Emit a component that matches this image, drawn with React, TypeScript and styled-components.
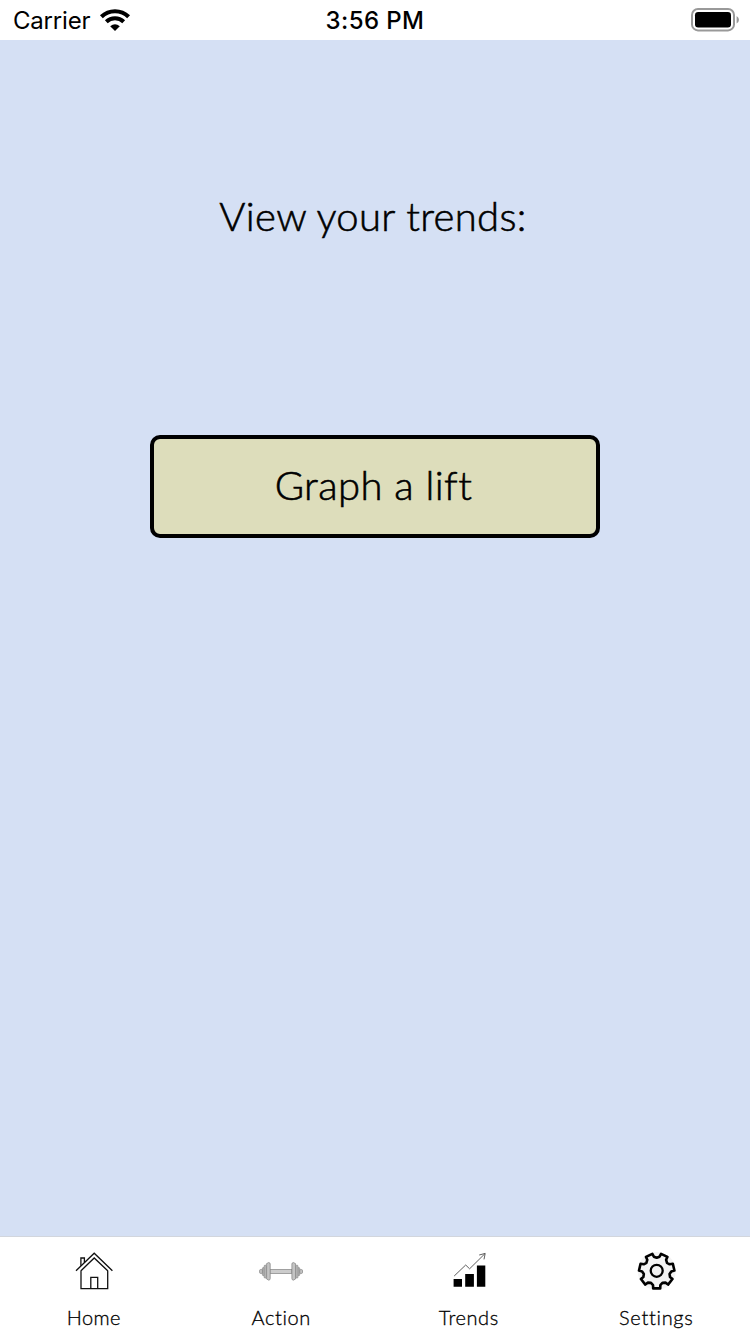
import React from "react";
import styled, { createGlobalStyle } from "styled-components";

const GlobalStyle = createGlobalStyle`
  body { margin: 0; background: #fff; }
  * { box-sizing: border-box; }
`;

const Screen = styled.div`
  display: flex;
  flex-direction: column;
  width: 750px;
  height: 1334px;
  overflow: hidden;
  background: #d5e0f4;
  color: #000;
  font-family: Lato, "Liberation Sans", sans-serif;
`;

const StatusBar = styled.header`
  display: grid;
  grid-template-columns: 1fr auto 1fr;
  align-items: center;
  height: 40px;
  padding: 0 11px 0 13px;
  background: #fff;
  font-family: Inter, "Liberation Sans", sans-serif;
  font-size: 24px;
  line-height: 38px;
`;

const Carrier = styled.div`
  display: flex;
  align-items: center;
  gap: 9px;
  letter-spacing: -0.2px;
`;

const StatusText = styled.span`
  padding-top: 2px;
`;

const Clock = styled(StatusText)`
  margin-right: 2px;
  font-weight: 500;
  letter-spacing: 0.4px;
`;

const BatterySlot = styled.div`
  display: flex;
  justify-content: flex-end;
`;

const Content = styled.main`
  flex: 1;
  display: flex;
  flex-direction: column;
  align-items: center;
`;

const Title = styled.h1`
  margin: 146px 0 0;
  padding-right: 4px;
  font-size: 40px;
  line-height: 60px;
  font-weight: 300;
  letter-spacing: 0.33px;
  -webkit-text-stroke: 0.6px #000;
  white-space: nowrap;
`;

const GraphButton = styled.button`
  width: 450px;
  height: 103px;
  margin: 189px 0 0;
  padding: 0 3px 3px 0;
  border: 4px solid #000;
  border-radius: 10px;
  background: #ddddbb;
  color: #000;
  font-family: inherit;
  font-size: 40px;
  font-weight: 300;
  letter-spacing: 0.45px;
  -webkit-text-stroke: 0.6px #000;
`;

const TabBar = styled.nav`
  display: flex;
  height: 98px;
  border-top: 1px solid #d2d6dd;
  background: #fff;
`;

const Tab = styled.a`
  flex: 1;
  display: flex;
  flex-direction: column;
  align-items: center;
  padding-top: 14px;
`;

const TabLabel = styled.span<{ $spacing: number }>`
  margin-top: 12px;
  font-size: 20px;
  line-height: 28px;
  font-weight: 300;
  letter-spacing: ${(p) => p.$spacing}px;
  -webkit-text-stroke: 0.3px #000;
`;

const Wifi = () => (
  <svg width="32" height="24" viewBox="0 0 32 24" fill="none" stroke="#000">
    <path d="M2.4 8.8A19.5 19.5 0 0 1 29.6 8.8" strokeWidth="4.1" />
    <path d="M7.3 13.8A12.5 12.5 0 0 1 24.7 13.8" strokeWidth="4" />
    <path d="M11.2 18.2Q16 14.2 20.8 18.2L16 23Z" fill="#000" stroke="none" />
  </svg>
);

const Battery = () => (
  <svg width="48" height="24" viewBox="0 0 48 24">
    <rect x="1" y="1" width="42" height="21.4" rx="6" fill="none" stroke="#999" strokeWidth="2" />
    <rect x="4" y="4" width="36" height="15.4" rx="3.2" />
    <path d="M45.6 8Q48 9.4 48 11.8T45.6 15.6Z" fill="#999" />
  </svg>
);

const HomeIcon = () => (
  <svg width="48" height="40" viewBox="0 0 48 40" fill="none" stroke="#111" strokeWidth="1.3">
    <path d="M6 19.8L24.2 2.2L42.4 19.8M11 19.5V37.6H37.7V19.5M11 19.8L24.2 7L37.7 19.8" />
    <path d="M10.9 14.8V7H14.4V11.4M20.8 37.6V26.4H27.7V37.6" />
  </svg>
);

const DumbbellIcon = () => (
  <svg width="48" height="40" viewBox="0 0 48 40" fill="#c4c4c4" stroke="#808080" strokeWidth="0.7">
    <rect x="12.8" y="18.6" width="22" height="3.8" fill="#ccc" />
    {["", "matrix(-1 0 0 1 48.1 0)"].map((transform) => (
      <g key={transform} transform={transform}>
        <rect x="2.6" y="18.6" width="3" height="3.8" rx="1" />
        <rect x="5.4" y="16.6" width="1.8" height="8" rx="0.8" />
        <rect x="7.2" y="14.2" width="2" height="12.8" rx="0.8" />
        <path d="M9.6 12.6L11.8 11.5Q13.2 11.7 13.2 13V27.6Q13.2 29 11.8 29.2L9.6 28Z" />
      </g>
    ))}
  </svg>
);

const TrendsIcon = () => (
  <svg width="48" height="40" viewBox="0 0 48 40">
    <path d="M8.6 28H17V35.8H8.6ZM20.2 23H28.9V35.8H20.2ZM31.9 14.4H40.3V35.8H31.9Z" />
    <path d="M9.2 25L20.7 14L24.6 17.8L40 2.6M34.2 4L40.2 2.4L39 8.4" fill="none" stroke="#555" strokeWidth="0.95" />
  </svg>
);

// Outline of a seven-toothed gear, one tooth pointing straight down.
const gearOutline = (cx: number, cy: number): string => {
  const steps: [number, number][] = [
    [-14.5, 14.6],
    [-11.5, 17.7],
    [11.5, 17.7],
    [14.5, 14.6],
    [25.7, 13.2],
  ];
  const points: string[] = [];
  for (let tooth = 0; tooth < 7; tooth++) {
    for (const [offset, radius] of steps) {
      const angle = ((90 + (tooth * 360) / 7 + offset) * Math.PI) / 180;
      points.push(`${(cx + radius * Math.cos(angle)).toFixed(2)} ${(cy + radius * Math.sin(angle)).toFixed(2)}`);
    }
  }
  return `M${points.join("L")}Z`;
};

const SettingsIcon = () => (
  <svg width="48" height="40" viewBox="0 0 48 40" fill="none" stroke="#000" strokeWidth="2.6" strokeLinejoin="round">
    <circle cx="24.7" cy="20" r="19" fill="#f3f3f3" stroke="none" />
    <path d={gearOutline(24.7, 20)} />
    <circle cx="24.7" cy="19.8" r="6" strokeWidth="2.3" />
  </svg>
);

const tabs = [
  { label: "Home", icon: HomeIcon, spacing: 0.4 },
  { label: "Action", icon: DumbbellIcon, spacing: 0.6 },
  { label: "Trends", icon: TrendsIcon, spacing: 0.6 },
  { label: "Settings", icon: SettingsIcon, spacing: 0.7 },
];

export default function App() {
  return (
    <>
      <GlobalStyle />
      <Screen>
        <StatusBar>
          <Carrier>
            <StatusText>Carrier</StatusText>
            <Wifi />
          </Carrier>
          <Clock>3:56 PM</Clock>
          <BatterySlot>
            <Battery />
          </BatterySlot>
        </StatusBar>
        <Content>
          <Title>View your trends:</Title>
          <GraphButton>Graph a lift</GraphButton>
        </Content>
        <TabBar>
          {tabs.map(({ label, icon: Icon, spacing }) => (
            <Tab key={label}>
              <Icon />
              <TabLabel $spacing={spacing}>{label}</TabLabel>
            </Tab>
          ))}
        </TabBar>
      </Screen>
    </>
  );
}
